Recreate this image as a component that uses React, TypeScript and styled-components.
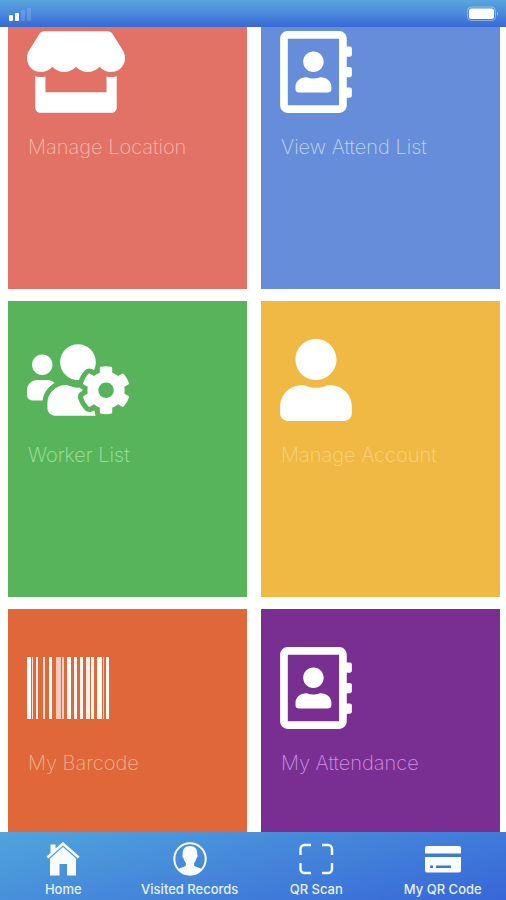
import React, { useLayoutEffect, useRef } from "react";
import styled, { createGlobalStyle } from "styled-components";
import { FaRegAddressBook, FaStore, FaUser, FaUsersCog } from "react-icons/fa";

const GlobalStyle = createGlobalStyle`
  *, *::before, *::after { box-sizing: border-box; }
  body {
    margin: 0;
    background: #ffffff;
    font-family: Inter, "Liberation Sans", sans-serif;
  }
`;

const Screen = styled.div`
  display: flex;
  flex-direction: column;
  height: 100vh;
`;

const StatusBar = styled.header`
  display: flex;
  flex: none;
  align-items: center;
  justify-content: space-between;
  height: 27px;
  padding: 0 6px 0 8px;
  background: linear-gradient(#58a5dc, #4a88dc 50%, #3869d6);
`;

const Content = styled.main`
  flex: 1;
  min-height: 0;
  overflow-y: auto;
  scrollbar-width: none;
`;

const TileGrid = styled.div`
  display: grid;
  grid-template-columns: 1fr 1fr;
  grid-auto-rows: 296px;
  gap: 12px 14px;
  padding: 0 6px 12px 8px;
`;

const Tile = styled.button<{ $bg: string; $ink: string }>`
  display: flex;
  flex-direction: column;
  align-items: flex-start;
  gap: 20px;
  padding: 38px 19px;
  border: 0;
  background: ${(p) => p.$bg};
  color: ${(p) => p.$ink};
  font-family: inherit;
  font-size: 20px;
  font-weight: 200;
  line-height: 28px;
  text-align: left;
  cursor: pointer;
`;

const TileIcon = styled.span`
  display: flex;
  align-items: center;
  height: 82px;
  color: #ffffff;
`;

const Glyph = styled.span<{ $width: number }>`
  display: flex;

  svg {
    width: ${(p) => p.$width}px;
    height: 82px;
  }
`;

const TileLabel = styled.span`
  padding-left: 1px;
`;

const TabBar = styled.nav`
  display: grid;
  flex: none;
  grid-template-columns: repeat(4, 1fr);
  height: 68px;
  background: linear-gradient(165deg, #50a4dc, #3866d8);
`;

const Tab = styled.a`
  display: flex;
  flex-direction: column;
  align-items: center;
  gap: 4px;
  padding-top: 9px;
  color: #e4f1fc;
  font-size: 13px;
  font-weight: 500;
  line-height: 16px;
  text-decoration: none;
  white-space: nowrap;

  svg {
    color: #f8fcff;
  }
`;

const BARS: [number, number, number][] = [
  [0, 4, 1], [5, 1, 0.8], [9, 2, 0.9], [16, 2, 0.8], [22, 3, 1],
  [29, 5, 0.65], [35, 2, 0.7], [40, 4, 1], [47, 3, 0.95], [53, 3, 0.95],
  [59, 4, 0.9], [64, 3, 0.95], [70, 5, 1], [76, 1, 0.7], [79, 3, 1],
];

const Barcode = () => (
  <svg width="82" height="62" viewBox="0 0 82 62" fill="currentColor" aria-hidden="true">
    {BARS.map(([x, w, o]) => (
      <rect key={x} x={x} width={w} height="62" opacity={o} />
    ))}
  </svg>
);

const Signal = () => (
  <svg width="24" height="14" viewBox="0 0 24 14" fill="#fff" role="img" aria-label="Signal">
    <rect x="1" y="8" width="4" height="6" rx="1" />
    <rect x="7" y="6" width="4" height="8" rx="1" />
    <rect x="13" y="3" width="4" height="11" rx="1" opacity=".15" />
    <rect x="19" y="1" width="4" height="13" rx="1" opacity=".15" />
  </svg>
);

const Battery = () => (
  <svg width="34" height="16" viewBox="0 0 34 16" role="img" aria-label="Battery">
    <rect x="1.5" y="1" width="28" height="13.5" rx="4" fill="none" stroke="#fff" strokeOpacity=".4" />
    <rect x="3" y="2.5" width="25" height="10.5" rx="2.5" fill="#fff" />
    <path d="M31 5.5q2 2.2 0 4.5z" fill="#fff" opacity=".5" />
  </svg>
);

const HomeIcon = () => (
  <svg width="34" height="36" viewBox="0 0 34 36" fill="currentColor" aria-hidden="true">
    <path d="M17 1 33.5 15.5 31.8 17.5 17 4.5 2.2 17.5 .5 15.5 4.5 12V3.5h5v4z" />
    <path d="M17 6 30 17.5V34.5h-9V23h-7.5v11.5H4V17.5z" />
  </svg>
);

const PersonIcon = () => (
  <svg width="34" height="36" viewBox="0 0 34 36" aria-hidden="true">
    <circle cx="17" cy="18" r="15.7" fill="none" stroke="currentColor" strokeWidth="2" />
    <path
      fill="currentColor"
      d="M17 5c5.3 0 7.6 3.4 7.2 8l.4 1.6c0 1.5-.6 2.5-1.3 2.9-.4 2-1.2 3.400-2.200 4.500v2.200c1.200 2.200 5.500 2 8.100 4.200A16 16 0 0 1 4.800 28.400c2.600-2.200 6.900-2 8.100-4.200V22c-1-1.100-1.800-2.500-2.200-4.500-.7-.4-1.300-1.400-1.300-2.900l.4-1.600C9.400 8.400 11.700 5 17 5z"
    />
  </svg>
);

const ScanIcon = () => (
  <svg width="36" height="36" viewBox="0 0 36 36" fill="none" stroke="currentColor" strokeWidth="2.4" aria-hidden="true">
    <path d="M2.5 14V8a4 4 0 0 1 4-4H13M24 4h6a4 4 0 0 1 4 4v6M34 22v6a4 4 0 0 1-4 4h-6M13 32H6.500a4 4 0 0 1-4-4v-6" />
  </svg>
);

const CardIcon = () => (
  <svg width="36" height="36" viewBox="0 0 36 36" fill="currentColor" aria-hidden="true">
    <path d="M2 5h32a2 2 0 0 1 2 2v5.5H0V7a2 2 0 0 1 2-2z" />
    <path
      fillRule="evenodd"
      d="M0 16h36V29.500a2 2 0 0 1-2 2H2a2 2 0 0 1-2-2zM5 24.500v2.400h3V24.500zM11 24.500v2.400h15V24.500z"
    />
  </svg>
);

const TILES = [
  { label: "Manage Location", bg: "#e27265", ink: "#f5bdaf", icon: <Glyph $width={98}><FaStore /></Glyph> },
  { label: "View Attend List", bg: "#668dd9", ink: "#bfd8f7", icon: <Glyph $width={72}><FaRegAddressBook /></Glyph> },
  { label: "Worker List", bg: "#57b45a", ink: "#a5e2a3", icon: <Glyph $width={102}><FaUsersCog /></Glyph> },
  { label: "Manage Account", bg: "#f0b944", ink: "#f8d483", icon: <Glyph $width={72}><FaUser /></Glyph> },
  { label: "My Barcode", bg: "#df673a", ink: "#f4b58e", icon: <Barcode /> },
  { label: "My Attendance", bg: "#782f91", ink: "#cf91e2", icon: <Glyph $width={72}><FaRegAddressBook /></Glyph> },
];

const TABS = [
  { label: "Home", icon: <HomeIcon /> },
  { label: "Visited Records", icon: <PersonIcon /> },
  { label: "QR Scan", icon: <ScanIcon /> },
  { label: "My QR Code", icon: <CardIcon /> },
];

const INITIAL_SCROLL = 34;

export default function App() {
  const content = useRef<HTMLElement>(null);

  useLayoutEffect(() => {
    if (content.current) content.current.scrollTop = INITIAL_SCROLL;
  }, []);

  return (
    <Screen>
      <GlobalStyle />
      <StatusBar>
        <Signal />
        <Battery />
      </StatusBar>
      <Content ref={content}>
        <TileGrid>
          {TILES.map((t) => (
            <Tile key={t.label} type="button" $bg={t.bg} $ink={t.ink}>
              <TileIcon>{t.icon}</TileIcon>
              <TileLabel>{t.label}</TileLabel>
            </Tile>
          ))}
        </TileGrid>
      </Content>
      <TabBar>
        {TABS.map((t) => (
          <Tab key={t.label} href="#">
            {t.icon}
            {t.label}
          </Tab>
        ))}
      </TabBar>
    </Screen>
  );
}
